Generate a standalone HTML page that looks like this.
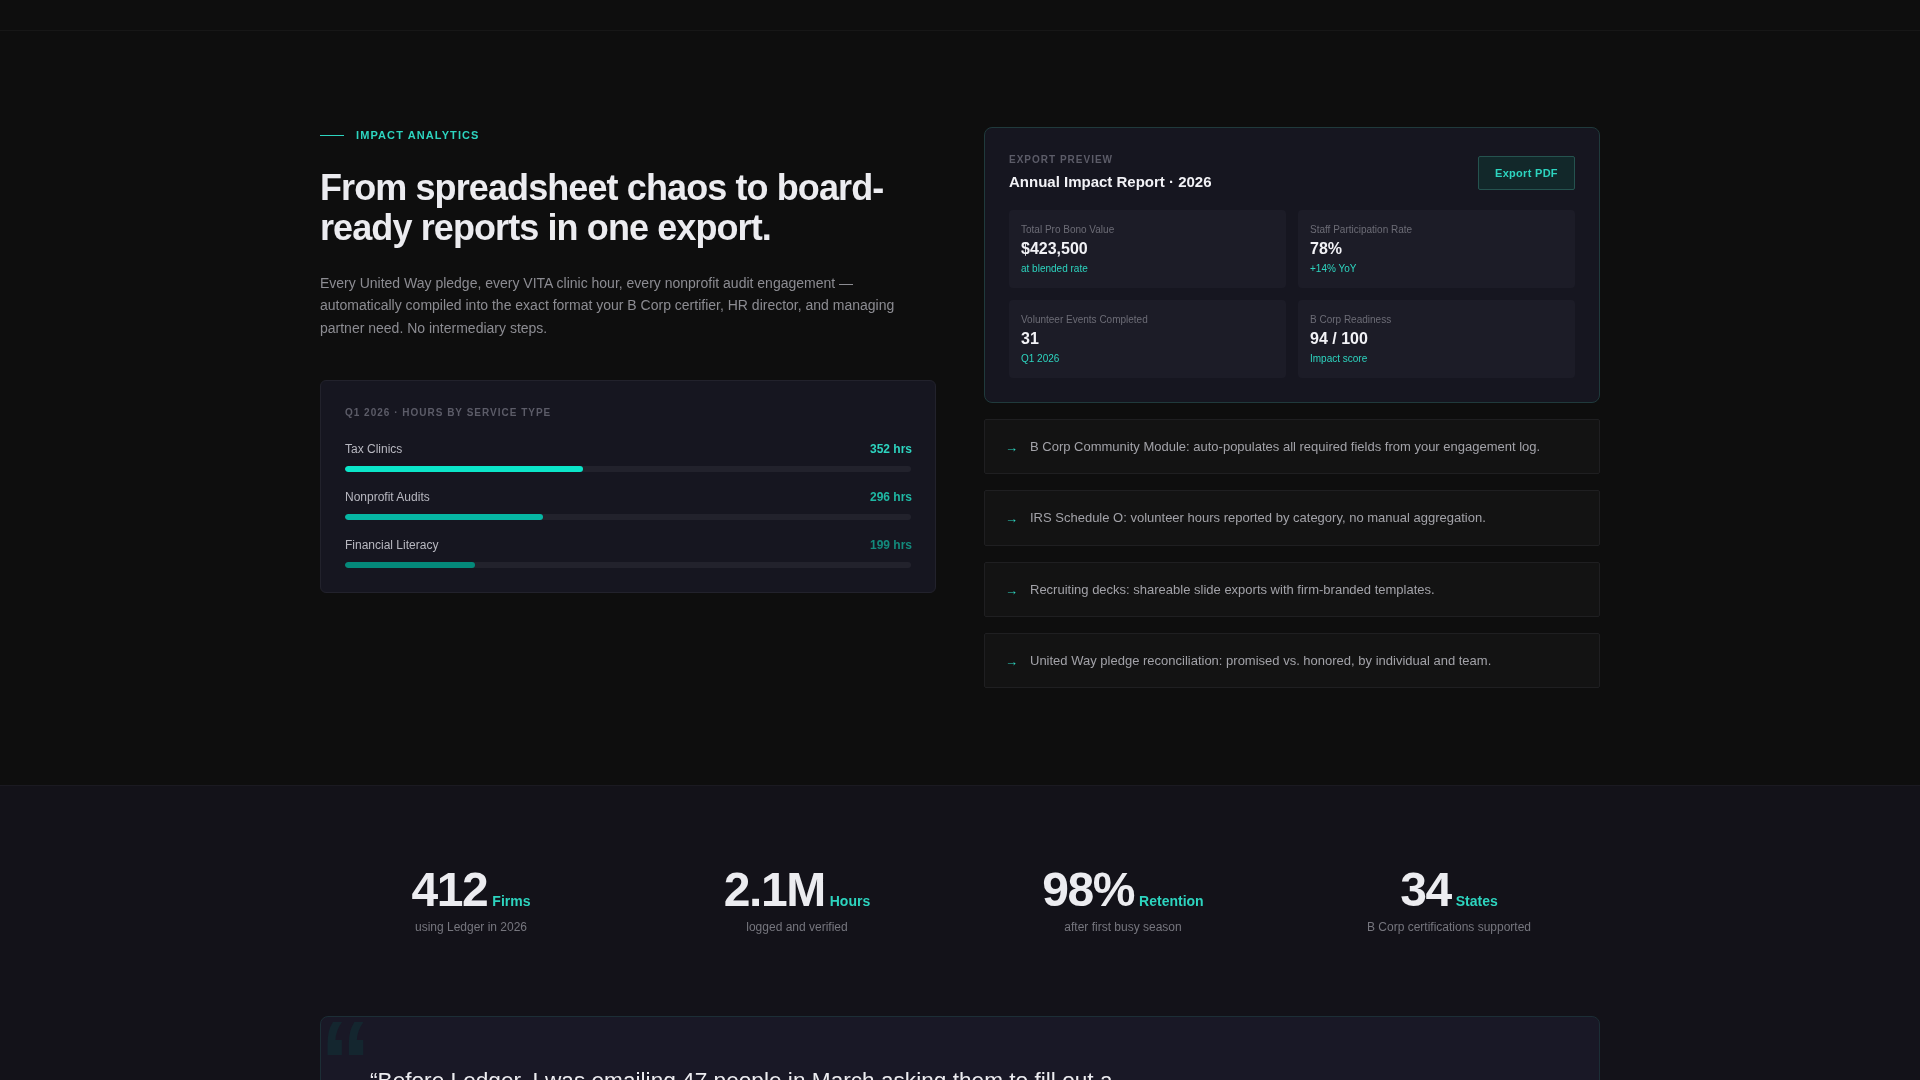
<!DOCTYPE html>
<html>
<head>
<meta charset="utf-8">
<style>
*{box-sizing:border-box;margin:0;padding:0}
html,body{width:1920px;height:1080px;overflow:hidden;background:#0e0e0e;font-family:"Liberation Sans",sans-serif;color:#e8e8ec;position:relative}
.a{position:absolute;white-space:nowrap}
.topline{left:0;top:30px;width:1920px;height:1px;background:#171717}
.sec2{left:0;top:785px;width:1920px;height:295px;background:#131219;border-top:1px solid #1b1a21}
.eline{left:320px;top:135px;width:24px;height:1px;background:#2dd4bf}
.etx{left:356px;top:129px;font-size:11px;line-height:13px;font-weight:700;letter-spacing:1.1px;color:#2dd4bf}
h1.a{left:320px;top:168px;width:616px;white-space:normal;font-size:36px;line-height:40px;font-weight:700;letter-spacing:-0.9px;color:#ececf0}
.lead{left:320px;top:272px;width:600px;white-space:normal;font-size:14px;line-height:22.4px;color:#8c8c92}
.hours{left:320px;top:380px;width:616px;height:213px;background:#161620;border:1px solid #22222c;border-radius:6px}
.cap{font-size:10px;line-height:12px;font-weight:700;letter-spacing:1px;color:#5c5c68}
.nm{font-size:12px;line-height:14px;color:#b8b8c0}
.val{font-size:12px;line-height:14px;font-weight:700;text-align:right}
.trk{left:345px;width:566px;height:6px;border-radius:3px;background:#22222c;overflow:hidden}
.fill{position:absolute;left:0;top:0;height:6px;border-radius:3px}
.card{left:984px;top:127px;width:616px;height:276px;background:#161620;border:1px solid #203a3c;border-radius:8px}
.ttl{font-size:15px;line-height:17px;font-weight:700;color:#f2f2f6}
.btn{left:1478px;top:156px;width:97px;height:34px;background:#12282a;border:1px solid #25534f;border-radius:2px}
.btx{left:1495px;top:167px;font-size:11px;line-height:13px;font-weight:700;letter-spacing:0.3px;color:#2dd4bf}
.tile{width:277px;height:78px;background:#1c1c27;border-radius:4px}
.tl{font-size:10px;line-height:12px;color:#6c6c76}
.tv{font-size:16px;line-height:18px;font-weight:700;color:#f2f2f6}
.ts{font-size:10px;line-height:12px;color:#2dd4bf}
.feat{left:984px;width:616px;height:55.33px;background:#131313;border:1px solid #1f1f21;border-radius:2px}
.ar{font-size:13px;line-height:15px;color:#2dd4bf}
.ft{font-size:13px;line-height:15px;color:#a2a2a8}
.stat{width:302px;text-align:center}
.num{font-size:48px;line-height:56px;font-weight:700;letter-spacing:-1.44px;color:#ececf0}
.u{font-size:14px;font-weight:700;letter-spacing:0;color:#2dd4bf;margin-left:5px}
.sub{font-size:12px;line-height:14px;color:#76767e}
.quote{left:320px;top:1016px;width:1280px;height:300px;background:#191826;border:1px solid #1c2e36;border-radius:8px;overflow:hidden}
.qm{left:-1px;top:-7px;font-size:102px;line-height:102px;font-weight:700;color:#14262f;transform:scaleY(1.15);transform-origin:0 37px}
.qt{left:370px;top:1067px;font-size:22.65px;line-height:26px;color:#ececf0}
</style>
</head>
<body>
<div class="a" style="left:0;top:0;width:1920px;height:1080px;will-change:transform">
<div class="a topline"></div>
<div class="a sec2"></div>

<div class="a eline"></div>
<div class="a etx">IMPACT ANALYTICS</div>
<h1 class="a">From spreadsheet chaos to board-ready reports in one export.</h1>
<p class="a lead">Every United Way pledge, every VITA clinic hour, every nonprofit audit engagement — automatically compiled into the exact format your B Corp certifier, HR director, and managing partner need. No intermediary steps.</p>

<div class="a hours"></div>
<div class="a cap" style="left:345px;top:407px">Q1 2026 · HOURS BY SERVICE TYPE</div>
<div class="a nm" style="left:345px;top:442px">Tax Clinics</div>
<div class="a val" style="right:1008px;top:442px;color:#2dd4bf">352 hrs</div>
<div class="a trk" style="top:466px"><div class="fill" style="width:42%;background:#0be5c9"></div></div>
<div class="a nm" style="left:345px;top:490px">Nonprofit Audits</div>
<div class="a val" style="right:1008px;top:490px;color:#1fb8a4">296 hrs</div>
<div class="a trk" style="top:514px"><div class="fill" style="width:35%;background:#06b7a4"></div></div>
<div class="a nm" style="left:345px;top:538px">Financial Literacy</div>
<div class="a val" style="right:1008px;top:538px;color:#138a7c">199 hrs</div>
<div class="a trk" style="top:562px"><div class="fill" style="width:23%;background:#04897a"></div></div>

<div class="a card"></div>
<div class="a cap" style="left:1009px;top:154px">EXPORT PREVIEW</div>
<div class="a ttl" style="left:1009px;top:173px">Annual Impact Report · 2026</div>
<div class="a btn"></div>
<div class="a btx">Export PDF</div>

<div class="a tile" style="left:1009px;top:210px"></div>
<div class="a tile" style="left:1298px;top:210px"></div>
<div class="a tile" style="left:1009px;top:300px"></div>
<div class="a tile" style="left:1298px;top:300px"></div>
<div class="a tl" style="left:1021px;top:224px">Total Pro Bono Value</div>
<div class="a tv" style="left:1021px;top:240px">$423,500</div>
<div class="a ts" style="left:1021px;top:263px">at blended rate</div>
<div class="a tl" style="left:1310px;top:224px">Staff Participation Rate</div>
<div class="a tv" style="left:1310px;top:240px">78%</div>
<div class="a ts" style="left:1310px;top:263px">+14% YoY</div>
<div class="a tl" style="left:1021px;top:314px">Volunteer Events Completed</div>
<div class="a tv" style="left:1021px;top:330px">31</div>
<div class="a ts" style="left:1021px;top:353px">Q1 2026</div>
<div class="a tl" style="left:1310px;top:314px">B Corp Readiness</div>
<div class="a tv" style="left:1310px;top:330px">94 / 100</div>
<div class="a ts" style="left:1310px;top:353px">Impact score</div>

<div class="a feat" style="top:419px"></div>
<div class="a ar" style="left:1005px;top:440px">→</div>
<div class="a ft" style="left:1030px;top:439px">B Corp Community Module: auto-populates all required fields from your engagement log.</div>
<div class="a feat" style="top:490.33px"></div>
<div class="a ar" style="left:1005px;top:511.33px">→</div>
<div class="a ft" style="left:1030px;top:510.33px">IRS Schedule O: volunteer hours reported by category, no manual aggregation.</div>
<div class="a feat" style="top:561.67px"></div>
<div class="a ar" style="left:1005px;top:582.67px">→</div>
<div class="a ft" style="left:1030px;top:581.67px">Recruiting decks: shareable slide exports with firm-branded templates.</div>
<div class="a feat" style="top:633px"></div>
<div class="a ar" style="left:1005px;top:654px">→</div>
<div class="a ft" style="left:1030px;top:653px">United Way pledge reconciliation: promised vs. honored, by individual and team.</div>

<div class="a stat" style="left:320px;top:862px"><div class="num">412<span class="u">Firms</span></div></div>
<div class="a stat sub" style="left:320px;top:920px">using Ledger in 2026</div>
<div class="a stat" style="left:646px;top:862px"><div class="num">2.1M<span class="u">Hours</span></div></div>
<div class="a stat sub" style="left:646px;top:920px">logged and verified</div>
<div class="a stat" style="left:972px;top:862px"><div class="num">98%<span class="u">Retention</span></div></div>
<div class="a stat sub" style="left:972px;top:920px">after first busy season</div>
<div class="a stat" style="left:1298px;top:862px"><div class="num">34<span class="u">States</span></div></div>
<div class="a stat sub" style="left:1298px;top:920px">B Corp certifications supported</div>

<div class="a quote"><div class="a qm">“</div></div>
<div class="a qt">“Before Ledger, I was emailing 47 people in March asking them to fill out a</div>
</div>
</body>
</html>
